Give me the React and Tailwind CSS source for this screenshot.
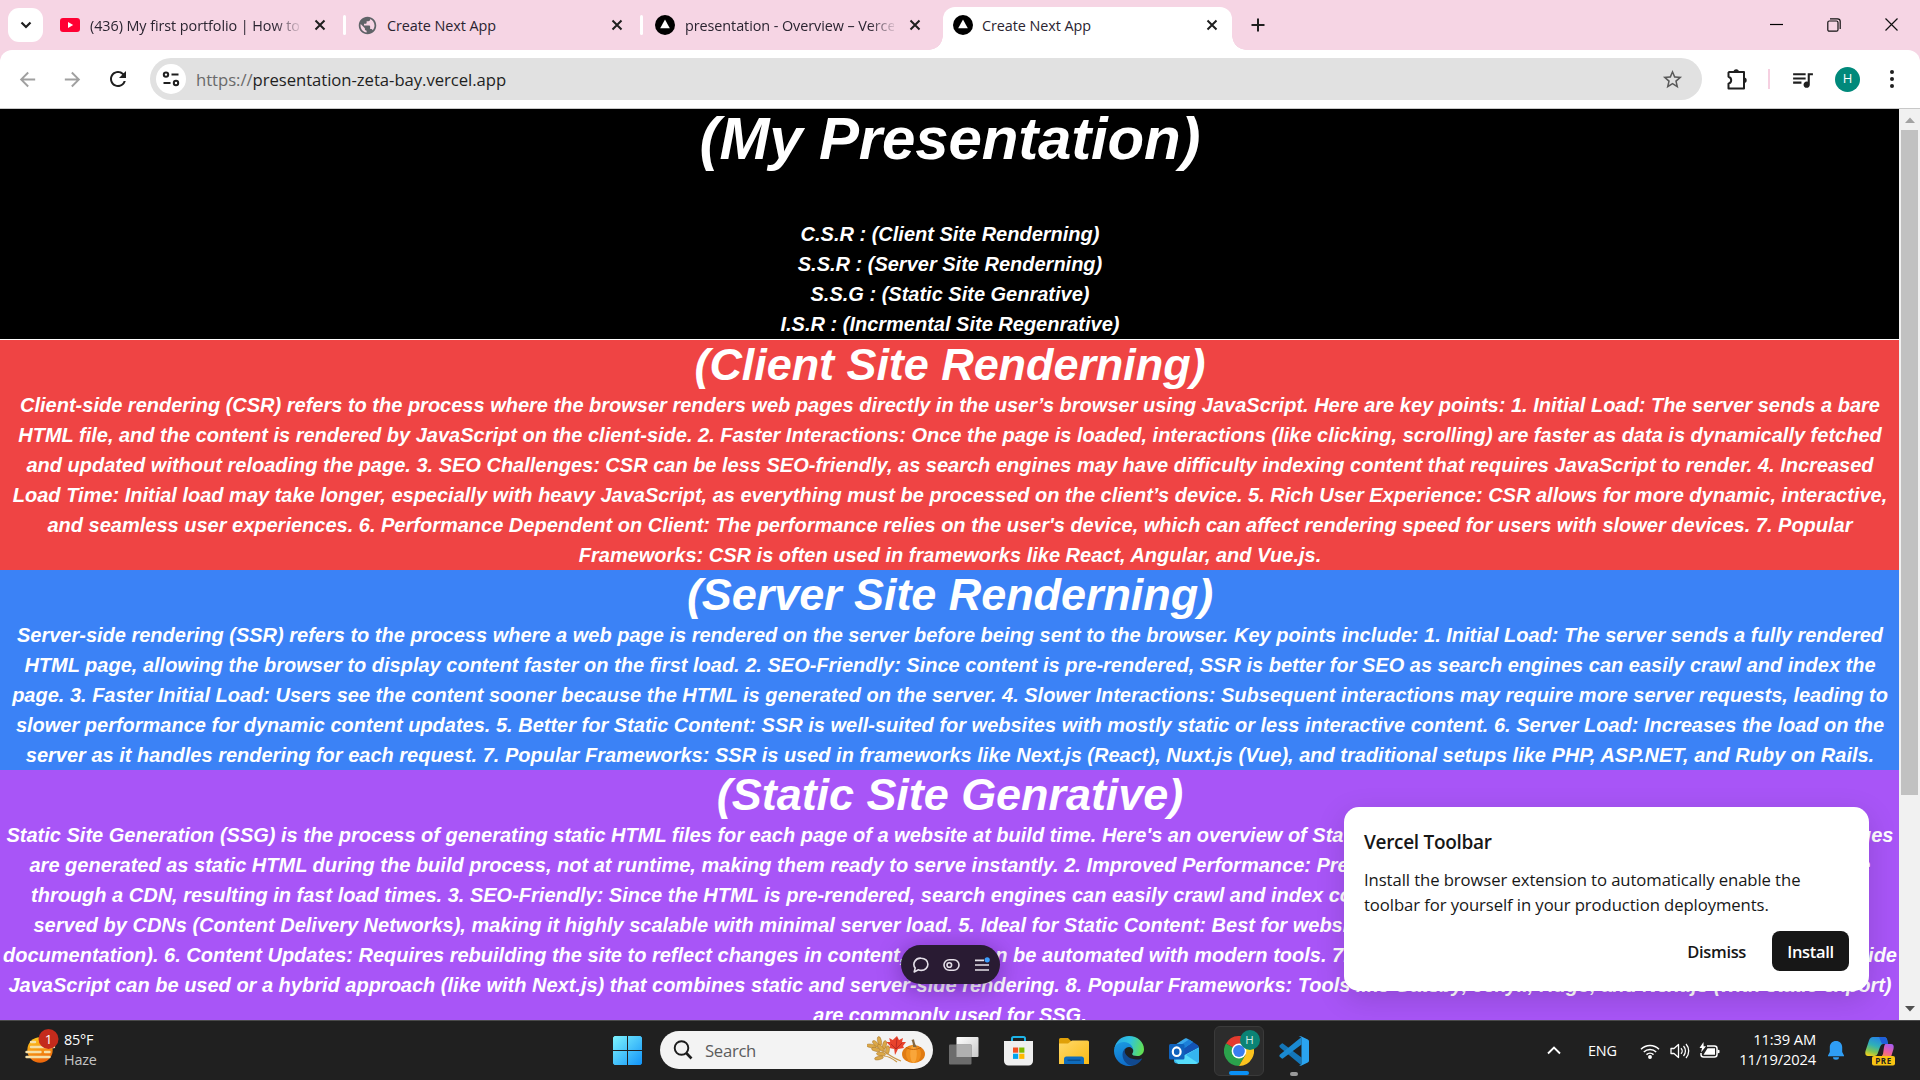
import React from "react";
import {
  MdArrowBack,
  MdArrowForward,
  MdRefresh,
  MdStarBorder,
  MdQueueMusic,
  MdPublic,
} from "react-icons/md";

function CloseX({ className = "" }) {
  return (
    <svg className={"shrink-0 " + className} width="12" height="12" viewBox="0 0 12 12">
      <path d="M1.5 1.5l9 9M10.5 1.5l-9 9" stroke="#1f1f1f" strokeWidth="2" fill="none" />
    </svg>
  );
}

function VercelIcon() {
  return (
    <svg className="shrink-0" width="20" height="20" viewBox="0 0 20 20">
      <circle cx="10" cy="10" r="10" fill="#000" />
      <path d="M10 4.6l4.8 8.6H5.2z" fill="#fff" />
    </svg>
  );
}

function YouTubeIcon() {
  return (
    <svg className="shrink-0" width="20" height="14" viewBox="0 0 20 14">
      <rect width="20" height="14" rx="3" fill="#ff0033" />
      <path d="M8 4l5.2 3L8 10z" fill="#fff" />
    </svg>
  );
}

function PuzzleIcon() {
  return (
    <svg className="ml-[24px] shrink-0" width="22" height="22" viewBox="0 0 22 22">
      <path
        d="M3.2 4H18v16.5H2.5v-4.7c1.7-0.5 2.7-1.7 2.7-3.5S4.2 9.3 2.500 8.800V4.700z"
        fill="none"
        stroke="#1f1f1f"
        strokeWidth="2"
        strokeLinejoin="round"
      />
      <path d="M7.500 4a2.700 2.700 0 0 1 5.400 0zM18 9.500a2.700 2.700 0 0 1 0 5.400z" fill="#1f1f1f" />
    </svg>
  );
}

const tabText = "mt-px whitespace-nowrap overflow-hidden text-[14.4px] tracking-[-0.07px] text-[#2a2430]";

function TabStrip() {
  return (
    <div className="flex h-[50px] bg-[#f6d5e4]">
      <div className="ml-2 mt-2 flex h-[34px] w-[35px] items-center justify-center rounded-[11px] bg-white">
        <svg width="12" height="8" viewBox="0 0 12 8">
          <path d="M1.5 1.5L6 6l4.5-4.5" stroke="#1f1f1f" strokeWidth="2.2" fill="none" />
        </svg>
      </div>
      <div className="flex h-[50px] w-[300px] items-center pl-[17px]">
        <YouTubeIcon />
        <div className={tabText + " ml-[10px] w-[209px] [mask-image:linear-gradient(to_right,black_88%,transparent_102%)]"}>
          (436) My first portfolio | How to
        </div>
        <CloseX className="ml-[15px]" />
      </div>
      <div className="mt-[15px] h-5 w-[3px] rounded-full bg-white" />
      <div className="flex h-[50px] w-[294px] items-center pl-[11px]">
        <MdPublic size={21} color="#5f6368" className="shrink-0" />
        <div className={tabText + " ml-[9px] flex-1"}>Create Next App</div>
        <CloseX className="mr-[17px]" />
      </div>
      <div className="mt-[15px] h-5 w-[3px] rounded-full bg-white" />
      <div className="flex h-[50px] w-[300px] items-center pl-[12px]">
        <VercelIcon />
        <div className={tabText + " ml-[10px] w-[209px] [mask-image:linear-gradient(to_right,black_88%,transparent_102%)]"}>
          presentation - Overview – Verce
        </div>
        <CloseX className="ml-[15px]" />
      </div>
      <div className="relative mt-[7px] flex h-[43px] w-[289px] items-center rounded-t-[12px] bg-white pb-[7px] pl-[10px]">
        <div className="absolute bottom-0 -left-[14px] size-[14px] bg-[radial-gradient(circle_at_0_0,transparent_13.5px,white_14px)]" />
        <div className="absolute bottom-0 -right-[14px] size-[14px] bg-[radial-gradient(circle_at_100%_0,transparent_13.5px,white_14px)]" />
        <VercelIcon />
        <div className={tabText + " ml-[9px] flex-1"}>Create Next App</div>
        <CloseX className="mr-[14px]" />
      </div>
      <svg className="ml-[19px] mt-[18px]" width="14" height="14" viewBox="0 0 14 14">
        <path d="M7 0.5v13M0.5 7h13" stroke="#1f1f1f" strokeWidth="2" />
      </svg>
      <div className="ml-auto mr-[22px] flex h-[49px] items-center gap-[44px]">
        <svg width="13" height="13" viewBox="0 0 13 13">
          <path d="M0 6.5h13" stroke="#000" strokeWidth="1.2" />
        </svg>
        <svg width="14" height="14" viewBox="0 0 14 14" fill="none" stroke="#111" strokeWidth="1.2">
          <rect x="0.8" y="3" width="10.2" height="10.2" rx="1.5" />
          <path d="M3 0.8h7.5a2.7 2.7 0 0 1 2.7 2.7V11" />
        </svg>
        <svg width="13" height="13" viewBox="0 0 13 13">
          <path d="M0.5 0.5l12 12M12.5 0.5l-12 12" stroke="#111" strokeWidth="1.2" />
        </svg>
      </div>
    </div>
  );
}

function Toolbar() {
  return (
    <div className="bg-[#f6d5e4]">
      <div className="flex h-[58px] items-start rounded-t-[12px] bg-white pt-2">
        <div className="flex h-[42px] items-center pl-[16px]">
          <MdArrowBack size={23} color="#a0a0a0" />
          <MdArrowForward size={23} color="#a0a0a0" className="ml-[22px]" />
          <MdRefresh size={24} color="#1f1f1f" className="ml-[22px]" />
        </div>
        <div className="ml-[20px] flex h-[42px] w-[1552px] items-center rounded-full bg-[#e1e1e1] pl-[6px]">
          <div className="flex size-[30px] items-center justify-center rounded-full bg-white">
            <svg width="18" height="18" viewBox="0 0 18 18" fill="none" stroke="#1f1f1f" strokeWidth="2">
              <circle cx="4" cy="4.6" r="2.2" />
              <path d="M9.5 4.6h7M1.5 13h7" />
              <circle cx="14" cy="13" r="2.2" />
            </svg>
          </div>
          <div className="ml-[10px] mt-px text-[16.7px] tracking-[-0.05px] text-[#1f1f1f]">
            <span className="text-[#6a6a6a]">https://</span>presentation-zeta-bay.vercel.app
          </div>
          <MdStarBorder size={23} color="#5a5a5a" className="ml-auto mr-[18px]" />
        </div>
        <div className="flex h-[42px] flex-1 items-center">
          <PuzzleIcon />
          <div className="ml-[20px] h-5 w-[2px] bg-[#f6d0e1]" />
          <MdQueueMusic size={25} color="#1f1f1f" className="ml-[20px]" />
          <div className="ml-[20px] flex size-[25px] items-center justify-center rounded-full bg-[#00897b] text-[13px] text-white">
            H
          </div>
          <div className="ml-[30px] flex flex-col gap-[3px]">
            <div className="size-[4px] rounded-full bg-[#1f1f1f]" />
            <div className="size-[4px] rounded-full bg-[#1f1f1f]" />
            <div className="size-[4px] rounded-full bg-[#1f1f1f]" />
          </div>
        </div>
      </div>
      <div className="h-px bg-[#c8c8c8]" />
    </div>
  );
}

const intro = [
  "C.S.R : (Client Site Renderning)",
  "S.S.R : (Server Site Renderning)",
  "S.S.G : (Static Site Genrative)",
  "I.S.R : (Incrmental Site Regenrative)",
];

const csr = [
  "Client-side rendering (CSR) refers to the process where the browser renders web pages directly in the user’s browser using JavaScript. Here are key points: 1. Initial Load: The server sends a bare",
  "HTML file, and the content is rendered by JavaScript on the client-side. 2. Faster Interactions: Once the page is loaded, interactions (like clicking, scrolling) are faster as data is dynamically fetched",
  "and updated without reloading the page. 3. SEO Challenges: CSR can be less SEO-friendly, as search engines may have difficulty indexing content that requires JavaScript to render. 4. Increased",
  "Load Time: Initial load may take longer, especially with heavy JavaScript, as everything must be processed on the client’s device. 5. Rich User Experience: CSR allows for more dynamic, interactive,",
  "and seamless user experiences. 6. Performance Dependent on Client: The performance relies on the user's device, which can affect rendering speed for users with slower devices. 7. Popular",
  "Frameworks: CSR is often used in frameworks like React, Angular, and Vue.js.",
];

const ssr = [
  "Server-side rendering (SSR) refers to the process where a web page is rendered on the server before being sent to the browser. Key points include: 1. Initial Load: The server sends a fully rendered",
  "HTML page, allowing the browser to display content faster on the first load. 2. SEO-Friendly: Since content is pre-rendered, SSR is better for SEO as search engines can easily crawl and index the",
  "page. 3. Faster Initial Load: Users see the content sooner because the HTML is generated on the server. 4. Slower Interactions: Subsequent interactions may require more server requests, leading to",
  "slower performance for dynamic content updates. 5. Better for Static Content: SSR is well-suited for websites with mostly static or less interactive content. 6. Server Load: Increases the load on the",
  "server as it handles rendering for each request. 7. Popular Frameworks: SSR is used in frameworks like Next.js (React), Nuxt.js (Vue), and traditional setups like PHP, ASP.NET, and Ruby on Rails.",
];

const ssg = [
  { w: "w-[1887px]", a: "Static Site Generation (SSG) is the process of generating static HTML files for each page of a website at build time. Here's an overview of Static Site Generation:", b: "1. Pre-built Pages: Pages" },
  { w: "w-[1841px]", a: "are generated as static HTML during the build process, not at runtime, making them ready to serve instantly. 2. Improved Performance: Pre-rendered pages", b: "can be served above" },
  { w: "w-[1838px]", a: "through a CDN, resulting in fast load times. 3. SEO-Friendly: Since the HTML is pre-rendered, search engines can easily crawl and index content. 4. Scalability:", b: "Files can be" },
  { w: "w-[1833px]", a: "served by CDNs (Content Delivery Networks), making it highly scalable with minimal server load. 5. Ideal for Static Content: Best for websites with static content", b: "(e.g., blogs," },
  { w: "w-[1894px]", a: "documentation). 6. Content Updates: Requires rebuilding the site to reflect changes in content, which can be automated with modern tools. 7. Limited Interactivity:", b: "client-side" },
  { w: "w-[1883px]", a: "JavaScript can be used or a hybrid approach (like with Next.js) that combines static and server-side rendering. 8. Popular Frameworks: Tools like Gatsby,", b: "Jekyll, Hugo, and Next.js (with static export)" },
];

function Heading({ children }) {
  return <h2 className="text-[45px] leading-[50px] tracking-[-0.06px]">{children}</h2>;
}

function Lines({ lines }) {
  return lines.map((l) => (
    <p key={l} className="whitespace-nowrap">
      {l}
    </p>
  ));
}

function VercelMenu() {
  return (
    <div className="absolute left-[901px] top-[836px] flex h-[39px] w-[99px] items-center justify-center gap-[14px] rounded-full bg-[#291b33] pl-px shadow-[0_4px_24px_rgba(40,0,80,0.4)]">
      <svg width="16" height="16" viewBox="0 0 16 16" fill="none" stroke="#e4dfe8" strokeWidth="1.6">
        <path d="M1.2 15l1-4A6.6 6.2 0 0 1 8.3 1.2c3.700 0 6.600 2.600 6.600 6s-2.900 6.200-6.600 6.200c-1 0-2-.2-2.900-.6z" strokeLinejoin="round" />
      </svg>
      <svg width="17" height="16" viewBox="0 0 17 16" fill="none" stroke="#e4dfe8" strokeWidth="1.6">
        <rect x="1" y="2.700" width="15" height="10.600" rx="5.300" />
        <circle cx="6.300" cy="8" r="2.300" />
      </svg>
      <svg width="16" height="16" viewBox="0 0 16 16">
        <path d="M1 3.300h9M1 8h14M1 13h14" stroke="#e4dfe8" strokeWidth="1.700" />
        <circle cx="13.200" cy="2.800" r="2.600" fill="#3b9eff" />
      </svg>
    </div>
  );
}

function InstallCard() {
  return (
    <div className="absolute left-[1344px] top-[698px] flex h-[184px] w-[525px] flex-col rounded-[15px] bg-white px-5 pt-[21px] font-['Open_Sans',sans-serif] text-[#171717] shadow-[0_8px_30px_rgba(0,0,0,0.14)]">
      <div className="text-[19px] leading-[28px] font-semibold tracking-[-0.3px]">Vercel Toolbar</div>
      <div className="mt-[11px] text-[16.7px] leading-[25px] tracking-[-0.085px] whitespace-nowrap">
        Install the browser extension to automatically enable the
        <br />
        toolbar for yourself in your production deployments.
      </div>
      <div className="mt-[14px] flex items-center justify-end text-[16.500px] font-semibold tracking-[-0.35px]">
        <div className="mr-[26px] pt-[2px]">Dismiss</div>
        <div className="flex h-[40px] w-[77px] items-center justify-center rounded-[8px] bg-[#171717] pt-[2px] text-white">Install</div>
      </div>
    </div>
  );
}

function Page() {
  return (
    <div className="relative flex h-[911px] overflow-hidden">
      <div className="w-[1899px] shrink-0 text-center font-['Liberation_Sans',Arial,sans-serif] text-[20px] leading-[30px] font-bold text-white italic *:pl-px">
        <div className="h-[231px] border-b border-white bg-black">
          <h1 className="mb-[50px] text-[60px] leading-[60px] tracking-[-0.15px]">(My Presentation)</h1>
          <Lines lines={intro} />
        </div>
        <div className="bg-[#ef4444]">
          <Heading>(Client Site Renderning)</Heading>
          <Lines lines={csr} />
        </div>
        <div className="bg-[#3b82f6]">
          <Heading>(Server Site Renderning)</Heading>
          <Lines lines={ssr} />
        </div>
        <div className="bg-[#a855f7]">
          <Heading>(Static Site Genrative)</Heading>
          {ssg.map((l) => (
            <p key={l.a} className={"mx-auto flex justify-between whitespace-nowrap " + l.w}>
              <span>{l.a}</span>
              <span>{l.b}</span>
            </p>
          ))}
          <p>are commonly used for SSG.</p>
        </div>
      </div>
      <div className="flex h-full w-[21px] flex-col items-center bg-[#f1f1f1]">
        <svg className="mt-[8px] shrink-0" width="10" height="6" viewBox="0 0 10 6">
          <path d="M0 6l5-5.500L10 6z" fill="#a3a3a3" />
        </svg>
        <div className="mt-[7px] h-[665px] w-[17px] bg-[#c1c1c1]" />
        <svg className="mt-auto mb-[8px] shrink-0" width="10" height="6" viewBox="0 0 10 6">
          <path d="M0 0l5 5.500L10 0z" fill="#505050" />
        </svg>
      </div>
      <VercelMenu />
      <InstallCard />
    </div>
  );
}

function Weather() {
  return (
    <svg width="36" height="38" viewBox="0 0 36 38">
      <defs>
        <linearGradient id="sun" x1="0" y1="0" x2="0.3" y2="1">
          <stop offset="0" stopColor="#ffcf1f" />
          <stop offset="1" stopColor="#ee6a0c" />
        </linearGradient>
      </defs>
      <circle cx="16" cy="21" r="12.700" fill="url(#sun)" />
      <g stroke="#f5e0a8" strokeWidth="2.400" strokeLinecap="round">
        <path d="M7 13h4M7 18h23M2.500 23h14M21 23h4.500M2.500 28h23" />
      </g>
      <circle cx="24.500" cy="10" r="10" fill="#c42b1c" />
      <text x="24.500" y="15" fontSize="13.500" textAnchor="middle" fill="#fff" fontFamily="Open Sans">1</text>
    </svg>
  );
}

function WindowsIcon() {
  return (
    <svg width="29" height="29" viewBox="0 0 29 29">
      <defs>
        <linearGradient id="win" x1="0" y1="0" x2="29" y2="29" gradientUnits="userSpaceOnUse">
          <stop offset="0" stopColor="#7df3fd" />
          <stop offset="0.5" stopColor="#48c4fb" />
          <stop offset="1" stopColor="#1193f8" />
        </linearGradient>
      </defs>
      <g fill="url(#win)">
        <path d="M1.500 0H14v14H0V1.500zM15 0h12.500L29 1.500V14H15zM0 15h14v14H1.500L0 27.500zM15 15h14v12.500L27.500 29H15z" />
      </g>
    </svg>
  );
}

function Autumn() {
  return (
    <svg width="59" height="28" viewBox="0 0 59 28">
      <g fill="#dba848" stroke="#a9762b" strokeWidth="0.5">
        <ellipse cx="4.500" cy="10" rx="5" ry="1.800" transform="rotate(8 4.500 10)" />
        <ellipse cx="12.500" cy="5" rx="1.900" ry="4.500" transform="rotate(-12 12.500 5)" />
        <ellipse cx="9" cy="8" rx="1.900" ry="4.500" transform="rotate(-45 9 8)" />
        <ellipse cx="17.500" cy="9" rx="1.900" ry="4.500" transform="rotate(14 17.500 9)" />
        <ellipse cx="9" cy="13.500" rx="4.500" ry="1.900" transform="rotate(12 9 13.500)" />
        <ellipse cx="14" cy="12" rx="1.900" ry="4.500" transform="rotate(-42 14 12)" />
        <ellipse cx="20.500" cy="14" rx="1.900" ry="4.300" transform="rotate(6 20.500 14)" />
        <ellipse cx="14" cy="18" rx="4.500" ry="1.900" transform="rotate(5 14 18)" />
        <ellipse cx="12" cy="22" rx="4.500" ry="1.700" transform="rotate(-12 12 22)" />
      </g>
      <path d="M15 14c5 3 10 8 19 11M17 20c5 0 9 3 13 6" stroke="#c79545" strokeWidth="1.200" fill="none" />
      <path d="M30 0l2 4 4-2-1 4 4 0-3 4 1 2-6 1-3 6-0.800-6-5-1 1-2-4-4 4 0-1-4 3.500 2z" fill="#e8432c" />
      <path d="M30 2l-1 11M29 13l-5-5M29 13l6-6" stroke="#a81f1f" strokeWidth="0.700" />
      <ellipse cx="46.500" cy="18" rx="11.500" ry="9" fill="#e07b12" />
      <ellipse cx="46.500" cy="18" rx="7.500" ry="9" fill="#f08f1c" />
      <ellipse cx="46.500" cy="18" rx="3.300" ry="9" fill="#f9a63a" />
      <path d="M39 11.500q7.500 4 15 0" stroke="#c5650c" strokeWidth="1" fill="none" />
      <path d="M46 11c0-3-0.500-5-1.500-7l2.500-0.800c0.500 3 1 5 3 8z" fill="#85673f" />
    </svg>
  );
}

function TaskView() {
  return (
    <svg width="31" height="30" viewBox="0 0 31 30">
      <defs>
        <linearGradient id="tv" x1="0" y1="0" x2="1" y2="1">
          <stop offset="0" stopColor="#fff" />
          <stop offset="1" stopColor="#c9c9c9" />
        </linearGradient>
      </defs>
      <rect x="8.500" y="1" width="22" height="20" rx="1" fill="url(#tv)" />
      <rect x="1" y="8.500" width="22.500" height="20" rx="1" fill="#6c6c6c" />
      <path d="M8.500 8.500h15V21h-15z" fill="#b0b0b0" />
    </svg>
  );
}

function Store() {
  return (
    <svg width="29" height="30" viewBox="0 0 29 30">
      <path d="M8 5.500V2.500A1.500 1.500 0 0 1 9.500 1h10A1.500 1.500 0 0 1 21 2.500v3" stroke="#1db4e8" strokeWidth="2" fill="none" />
      <path d="M0 5h29v20a4.500 4.500 0 0 1-4.500 4.500h-20A4.500 4.500 0 0 1 0 25z" fill="#efefef" />
      <path d="M9 11.500h5.200v5.200H9z" fill="#f25022" />
      <path d="M15.200 11.500h5.200v5.200h-5.200z" fill="#7fba00" />
      <path d="M9 17.700h5.200v5.200H9z" fill="#00a4ef" />
      <path d="M15.200 17.700h5.200v5.200h-5.200z" fill="#ffb900" />
    </svg>
  );
}

function Folder() {
  return (
    <svg width="30" height="30" viewBox="0 0 30 30">
      <defs>
        <linearGradient id="fo" x1="0" y1="0" x2="1" y2="1">
          <stop offset="0" stopColor="#ffd96b" />
          <stop offset="1" stopColor="#fbbb14" />
        </linearGradient>
      </defs>
      <path d="M0 3.500A1.500 1.500 0 0 1 1.500 2H9l3.500 3.500L9 10H0z" fill="#e0a008" />
      <path d="M0 7.500h9l4-3h15.500A1.500 1.500 0 0 1 30 6v22H0z" fill="url(#fo)" />
      <path d="M5 28v-5A2.500 2.500 0 0 1 7.500 20.500h15a2.500 2.500 0 0 1 2.500 2.500v5z" fill="#0f6cbd" />
      <path d="M8.500 24.200h13" stroke="#0a4a86" strokeWidth="1.300" />
    </svg>
  );
}

function Edge() {
  return (
    <svg width="30" height="30" viewBox="0 0 24 24">
      <defs>
        <linearGradient id="e1" x1="0" y1="0.300" x2="1" y2="0.500">
          <stop offset="0" stopColor="#2aa9e8" />
          <stop offset="0.500" stopColor="#2fc3df" />
          <stop offset="1" stopColor="#62e052" />
        </linearGradient>
        <linearGradient id="e2" x1="0" y1="0" x2="0.300" y2="1">
          <stop offset="0" stopColor="#1b9de2" />
          <stop offset="1" stopColor="#0f6fcb" />
        </linearGradient>
      </defs>
      <path d="M0.300 10C1.300 4.300 6 0 12 0c7 0 12 5 12 10.500 0 3.500-2.500 5.500-5.500 5.500-2.600 0-4-0.800-4-1.600 0-0.500 0.900-1 0.900-2.600C15.400 9.300 12.500 7 9 7c-4 0-7 1.500-8.700 3z" fill="url(#e1)" />
      <path d="M0 12c0-4.500 3.500-7.300 8-7.300 4 0 7.400 3 7.400 7.100 0-1.500-1.500-3-3.400-3-2.500 0-4.500 2.500-4.500 6 0 5 4 8.700 8 8.700-1 0.400-2.300 0.500-3.500 0.500C5.400 24 0 18.500 0 12z" fill="url(#e2)" />
      <path d="M9.500 9.600c-1.500 1-2.700 3-2.700 5.400 0 5 4.200 8.800 8 8.800 3.200-0.700 5.700-2.500 7.300-5.100 0.400-0.500 0-0.900-0.500-0.600-1 0.500-2.100 0.700-3.400 0.700-5 0-9-3-9.500-5.800-0.200-1.200 0-2.500 0.800-3.400z" fill="#11498f" />
    </svg>
  );
}

function Outlook() {
  return (
    <svg width="30" height="30" viewBox="0 0 30 30">
      <path d="M5 10L17 2.500 29 10v14.500a3 3 0 0 1-3 3H8a3 3 0 0 1-3-3z" fill="#35b6ee" />
      <path d="M5 9.500L15.500 2.700q1.500-0.800 3 0L24 6 12 14z" fill="#3aa8ec" />
      <path d="M24 6l4.500 3q1.500 1 1.500 2.500L13 21l-5-4z" fill="#1353b5" />
      <path d="M20 3.500L24 6 11 15l-4-3z" fill="#1b7fd8" />
      <path d="M30 11.500v13a3.500 3.500 0 0 1-3.500 3.500H9l-3-4z" fill="#56dcfa" />
      <path d="M30 11.500v13a3.500 3.500 0 0 1-1 2.500L17 19z" fill="#35b4f0" />
      <rect y="8" width="15.500" height="15.500" rx="1.500" fill="#0f62bd" />
      <ellipse cx="7.700" cy="15.700" rx="3.900" ry="4.300" fill="none" stroke="#fff" strokeWidth="2.200" />
    </svg>
  );
}

function Chrome() {
  return (
    <div className="relative flex size-[50px] items-center justify-center rounded-[6px] border border-[#3a3a3a] bg-[#2c2c2c]">
      <svg width="30" height="30" viewBox="0 0 30 30">
        <path d="M15 15L2 7.500A15 15 0 0 1 28 7.500H15z" fill="#e33b2e" />
        <path d="M15 15L2 7.500A15 15 0 0 0 15 30l6.500-11.200z" fill="#2ba24c" />
        <path d="M15 30A15 15 0 0 0 28 7.500H15l6.500 11.300z" fill="#fcc31e" />
        <circle cx="15" cy="15" r="7.400" fill="#fff" />
        <circle cx="15" cy="15" r="5.900" fill="#3a7df0" />
      </svg>
      <div className="absolute left-[25px] top-[3px] flex size-5 items-center justify-center rounded-full bg-[#0b8375] text-[11.500px] text-[#d5ebe8]">H</div>
      <div className="absolute bottom-0 left-[14px] h-[4px] w-5 rounded-full bg-[#0a90f5]" />
    </div>
  );
}

function VSCode() {
  return (
    <div className="relative flex size-[50px] items-center justify-center">
      <svg width="30" height="30" viewBox="0 0 30 30">
        <path d="M0.500 9.500l2-1.800a1.300 1.300 0 0 1 1.700 0L22.500 21.500v8L1 11.500q-1-1-0.500-2z" fill="#1476b8" />
        <path d="M0.500 20.500l2 1.800a1.300 1.300 0 0 0 1.700 0L22.500 8.500V1L1 18.500q-1 1-0.500 2z" fill="#1a8ad2" />
        <path d="M22 0.300l6.800 3.100A2 2 0 0 1 30 5.200v19.600a2 2 0 0 1-1.200 1.800L22 29.700q-1.500 0.300-2.300-0.700 2.800 1 2.800-1.500v-25q0-2.500-2.800-1.500 0.800-1 2.300-0.700z" fill="#2aa4f0" />
      </svg>
      <div className="absolute bottom-0 left-[21px] h-[4px] w-2 rounded-full bg-[#9a9a9a]" />
    </div>
  );
}

function Copilot() {
  return (
    <svg width="30" height="30" viewBox="0 0 30 30">
      <defs>
        <linearGradient id="c1" x1="0.600" y1="0" x2="0.200" y2="1">
          <stop offset="0" stopColor="#2580e8" />
          <stop offset="0.450" stopColor="#2fb0b8" />
          <stop offset="0.750" stopColor="#7cc455" />
          <stop offset="1" stopColor="#f0d020" />
        </linearGradient>
        <linearGradient id="c2" x1="0.700" y1="0" x2="0.300" y2="1">
          <stop offset="0" stopColor="#a85cf0" />
          <stop offset="0.600" stopColor="#f0609a" />
          <stop offset="1" stopColor="#f88a50" />
        </linearGradient>
      </defs>
      <path d="M8 1h11q3 0 3.500 4l0.500 3h-5q-2 0-3 3l-2.500 7q-0.800 2-3 2H3q-3.500 0-2.500-5L4 4.500Q5 1 8 1z" fill="url(#c1)" />
      <path d="M14 1h5q2.500 0 3.300 4l0.700 3h-4.500q-2 0-3-3.500z" fill="#1f5fd8" />
      <path d="M20.500 8H26q3.500 0 2.500 5l-2.500 8h-11q2 0 3-3l1-7q0.500-3 1.500-3z" fill="url(#c2)" />
      <rect x="7" y="20" width="23" height="9.500" rx="2" fill="#f9c413" />
      <text x="18.500" y="27.700" fontSize="8" fontWeight="700" letterSpacing="0.500" textAnchor="middle" fill="#222" fontFamily="Open Sans">PRE</text>
    </svg>
  );
}

function Taskbar() {
  return (
    <div className="flex h-[60px] items-center border-t border-[#4a4a4a] bg-[#202020] text-white">
      <div className="flex w-[613px] items-center pl-[24px]">
        <div className="-mt-[6px]">
          <Weather />
        </div>
        <div className="ml-[4px] -mt-[2px] text-[14.400px] leading-[20px] tracking-[-0.200px]">
          <div>85°F</div>
          <div className="text-[#c4c4c4]">Haze</div>
        </div>
      </div>
      <WindowsIcon />
      <div className="ml-[18px] -mt-px flex h-[38px] w-[273px] items-center rounded-full bg-[#f3f3f3] pl-[13px]">
        <svg width="20" height="20" viewBox="0 0 20 20" fill="none" stroke="#1c1c1c">
          <circle cx="8.500" cy="8" r="6.800" strokeWidth="1.900" />
          <path d="M13.200 13l5.300 5.500" strokeWidth="2.600" />
        </svg>
        <div className="ml-[12px] mt-px text-[16.700px] tracking-[-0.300px] text-[#5c5c5c]">Search</div>
        <div className="ml-auto mr-[7px]">
          <Autumn />
        </div>
      </div>
      <div className="ml-[3px] flex items-center">
        {[TaskView, Store, Folder, Edge, Outlook, Chrome, VSCode].map((Icon, i) => (
          <div key={i} className="flex h-[50px] w-[55px] items-center justify-center">
            <Icon />
          </div>
        ))}
      </div>
      <div className="ml-auto flex items-center pr-[25px]">
        <svg width="14" height="9" viewBox="0 0 14 9">
          <path d="M1 7.500l6-6 6 6" stroke="#fff" strokeWidth="1.900" fill="none" />
        </svg>
        <div className="ml-[27px] w-[30px] text-[14.400px] tracking-[-0.150px]">ENG</div>
        <svg className="ml-[22px]" width="20" height="16" viewBox="0 0 20 16" fill="none" stroke="#fff" strokeWidth="1.500">
          <path d="M1 6.200a12.600 12.600 0 0 1 18 0M3.800 9a8.800 8.800 0 0 1 12.400 0M6.500 11.600a5 5 0 0 1 7 0" />
          <circle cx="10" cy="14" r="1.200" fill="#fff" />
        </svg>
        <svg className="ml-[10px]" width="20" height="16" viewBox="0 0 20 16" fill="none" stroke="#fff" strokeWidth="1.300">
          <path d="M1 5.500h3l4.500-4v13L4 10.500H1z" strokeLinejoin="round" />
          <path d="M11 5.200a4 4 0 0 1 0 5.600M13.500 3a7.500 7.500 0 0 1 0 10M16 1a10.500 10.500 0 0 1 0 14" />
        </svg>
        <svg className="ml-[9px]" width="21" height="17" viewBox="0 0 21 17">
          <path d="M8 4h7.500A2.500 2.500 0 0 1 18 6.500v6a2.500 2.500 0 0 1-2.500 2.500h-11A2.500 2.500 0 0 1 2 12.500V11" fill="none" stroke="#fff" strokeWidth="1.500" />
          <path d="M8.500 6.300H16v6.500H4.500z" fill="#fff" />
          <path d="M18.500 7.500l2 0.800v2.500l-2 0.800z" fill="#fff" />
          <path d="M4.500 0L0.500 6H3l-1 4.500L7 4.300H4.600z" fill="#fff" />
        </svg>
        <div className="ml-[16px] w-[80px] -mt-[3px] whitespace-nowrap text-right text-[14.700px] leading-[20px] tracking-[-0.130px]">
          <div>11:39 AM</div>
          <div>11/19/2024</div>
        </div>
        <svg className="ml-[12px]" width="16" height="19" viewBox="0 0 16 19">
          <path d="M8 0c3.700 0 6.200 2.700 6.200 6.200V11L16 14.500v0.700H0v-0.700L1.800 11V6.200C1.800 2.700 4.300 0 8 0zM5 16.200h6a3 2.500 0 0 1-6 0z" fill="#2f9df4" />
        </svg>
        <div className="ml-[21px]">
          <Copilot />
        </div>
      </div>
    </div>
  );
}

export default function App() {
  return (
    <div className="flex h-[1080px] w-[1920px] flex-col overflow-hidden bg-white font-['Open_Sans',sans-serif]">
      <TabStrip />
      <Toolbar />
      <Page />
      <Taskbar />
    </div>
  );
}
